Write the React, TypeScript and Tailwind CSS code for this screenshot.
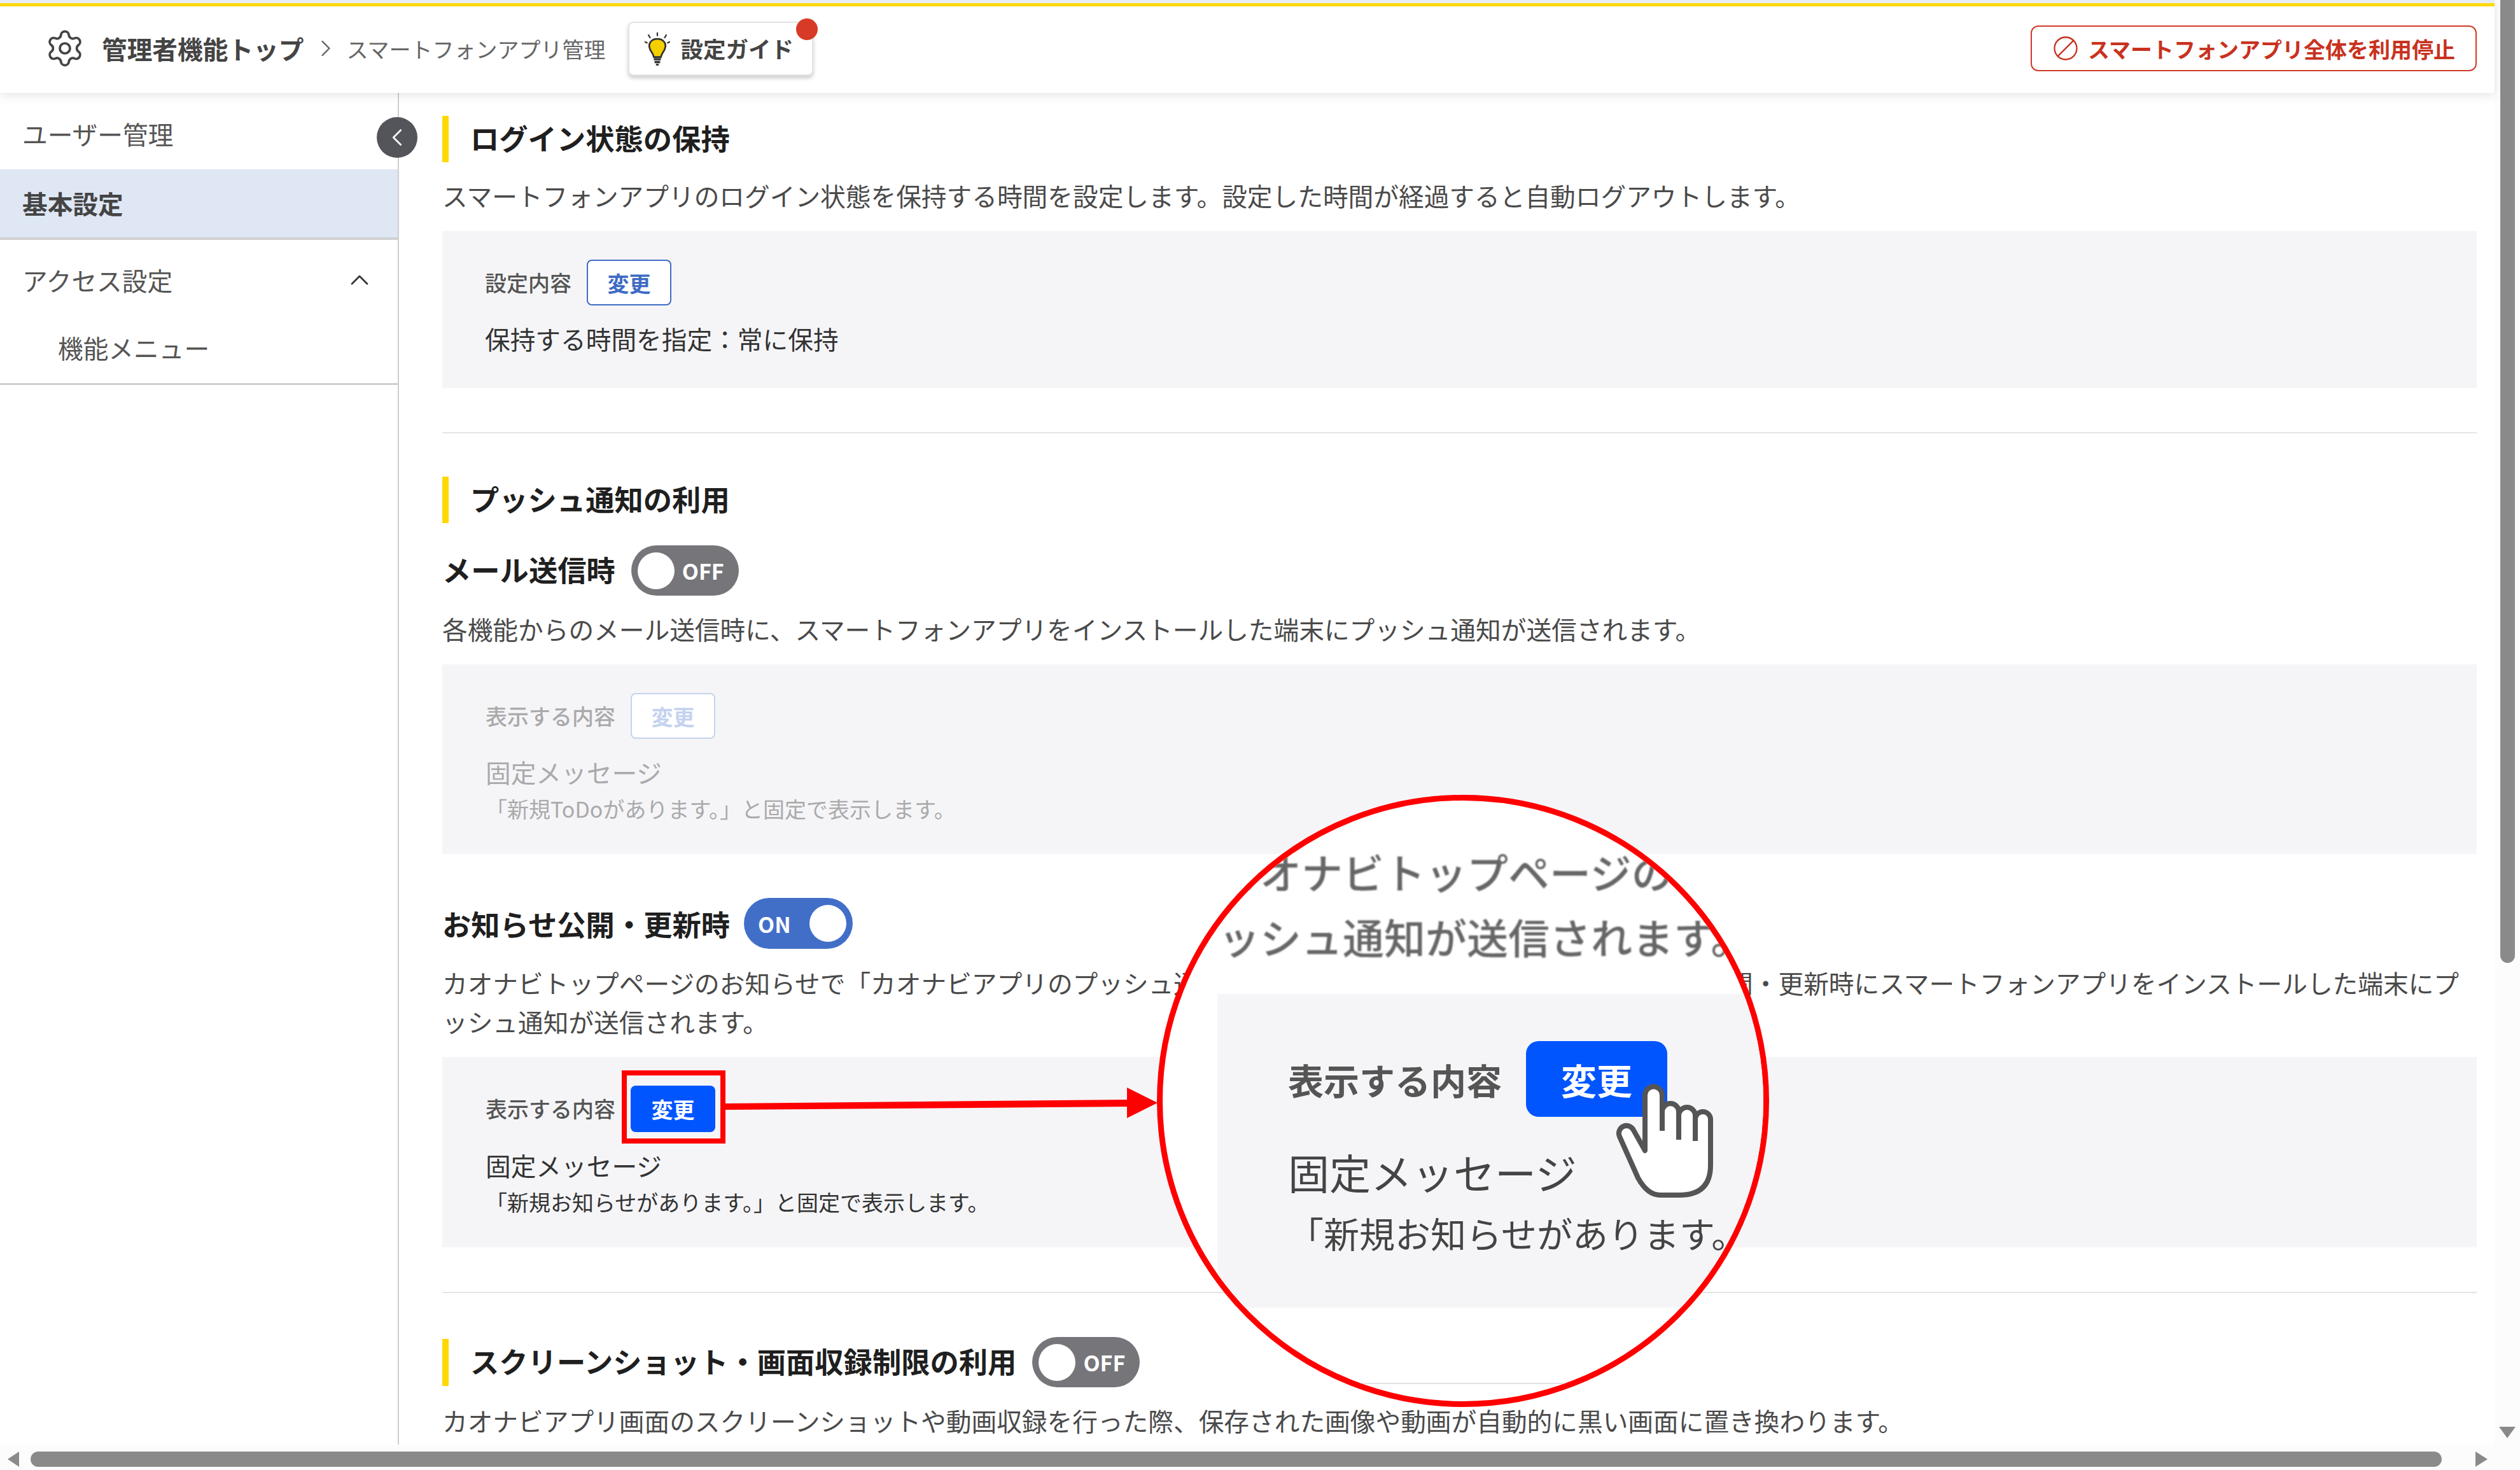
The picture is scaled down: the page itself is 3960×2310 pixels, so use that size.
import React from "react";
import { Ban, ChevronLeft, ChevronRight, ChevronUp, Settings } from "lucide-react";

function SectionTitle({ children }: { children: React.ReactNode }) {
  return (
    <div className="flex items-center">
      <div className="w-[10px] h-[73px] bg-[#ffd800]" />
      <h2 className="ml-[34px] pb-[4px] text-[45.3px] leading-[69px] font-bold text-[#1f1f1f]">{children}</h2>
    </div>
  );
}

function Toggle({ on }: { on: boolean }) {
  if (on) {
    return (
      <div className="w-[171px] h-[80px] rounded-full bg-[#416fc8] flex items-center justify-between pl-[22px] pr-[10px]">
        <span className="text-[34px] font-bold text-white">ON</span>
        <div className="w-[58px] h-[58px] rounded-full bg-white" />
      </div>
    );
  }
  return (
    <div className="w-[169px] h-[79px] rounded-full bg-[#75757a] flex items-center pl-[10px]">
      <div className="w-[58px] h-[58px] rounded-full bg-white" />
      <span className="ml-[12px] text-[34px] font-bold text-white">OFF</span>
    </div>
  );
}

function Desc({ children }: { children: React.ReactNode }) {
  return <p className="mt-[21px] mb-[2px] text-[39.7px] leading-[61px] text-[#4a4a4a] whitespace-nowrap">{children}</p>;
}

function Hand() {
  return (
    <svg viewBox="0 0 153 181" className="absolute left-[712px] top-[443px] w-[153px] h-[181px]">
      <path
        d="M46 107 V20 A13.5 13.5 0 0 1 73 20 V46 A13 13 0 0 1 99 46 V52 A13 13 0 0 1 125 52 V58 A12 12 0 0 1 149 58 V130 Q149 177 100 177 H70 Q50 177 35 150 L6 85 A12 12 0 0 1 28 75 Z"
        fill="#fff"
        stroke="#555"
        strokeWidth="8"
        strokeLinejoin="round"
      />
      <path d="M73 46 V76 M99 52 V90 M125 58 V92" fill="none" stroke="#555" strokeWidth="8" />
    </svg>
  );
}

function Magnifier() {
  return (
    <div className="absolute left-[1818px] top-[1249px] w-[962px] h-[962px] rounded-full border-[9px] border-[#f00] bg-white overflow-hidden pt-[60px]">
      <p className="ml-[88px] text-[65px] leading-[102px] font-medium text-[#666] whitespace-nowrap blur-[1px]">
        カオナビトップページの
        <br />
        ッシュ通知が送信されます。
      </p>
      <div className="ml-[86px] mt-[40px] w-[1000px] h-[493px] bg-[#f5f5f8] pt-[74px] pl-[111px] flex flex-col">
        <div className="flex items-center h-[119px]">
          <span className="text-[56px] font-bold text-[#555] w-[333px] whitespace-nowrap blur-[0.6px]">表示する内容</span>
          <div className="ml-[41px] w-[222px] h-[119px] rounded-[20px] bg-[#0055ff] flex items-center justify-center">
            <span className="text-[56px] font-bold text-white">変更</span>
          </div>
        </div>
        <p className="mt-[41px] mb-[2px] text-[65px] leading-[90px] text-[#444] whitespace-nowrap blur-[0.6px]">固定メッセージ</p>
        <p className="mt-[9px] text-[56px] leading-[80px] text-[#444] whitespace-nowrap blur-[0.6px]">
          「新規お知らせがあります。
        </p>
      </div>
      <div className="mt-[118px] h-[2px] bg-[#e3e3e6]" />
      <Hand />
    </div>
  );
}

function Sidebar() {
  return (
    <aside className="relative w-[627px] shrink-0 border-r-2 border-[#cfcfcf] text-[39.7px] text-[#555]">
      <div className="h-[120px] pt-[8px] pl-[35px] flex items-center">ユーザー管理</div>
      <div className="h-[111px] pb-[2px] pl-[35px] flex items-center bg-[#dfe7f5] border-b-4 border-[#d0d0d0] font-bold text-[#444]">基本設定</div>
      <div className="h-[128px] pb-[3px] pl-[35px] pr-[36px] flex items-center justify-between">
        アクセス設定
        <ChevronUp size={48} strokeWidth={1.4} className="text-[#333]" />
      </div>
      <div className="h-[100px] pb-[16px] pl-[91px] flex items-center border-b-[3px] border-[#cfcfcf]">機能メニュー</div>
      <button className="absolute left-[592px] top-[38px] w-[64px] h-[64px] rounded-full bg-[#54555a] flex items-center justify-center text-white">
        <ChevronLeft size={46} strokeWidth={1.4} />
      </button>
    </aside>
  );
}

function Header() {
  return (
    <header className="relative z-10 shrink-0 h-[146px] bg-white shadow-[0_4px_14px_rgba(0,0,0,0.1)]">
      <div className="h-[5px] bg-[#e9ecf4]" />
      <div className="h-[5px] bg-[#ffd800]" />
      <div className="h-[136px] pl-[70px] pr-[28px] pb-[4px] flex items-center">
        <Settings size={64} strokeWidth={1.4} className="text-[#444]" />
        <span className="ml-[26px] text-[39.7px] font-bold text-[#444]">管理者機能トップ</span>
        <ChevronRight size={44} strokeWidth={1.3} className="ml-[12px] text-[#666]" />
        <span className="ml-[11px] text-[34px] text-[#666]">スマートフォンアプリ管理</span>
        <div className="relative ml-[36px] w-[291px] h-[85px] rounded-[8px] border-2 border-[#e4e4e4] bg-white shadow-[0_4px_6px_rgba(0,0,0,0.2)] flex items-center pl-[23px]">
          <svg viewBox="0 0 38 48" className="w-[42px] h-[53px]">
            <path d="M19 10 C10 10 6 17 8 23 C9 28 13 30 14 36 H24 C25 30 29 28 30 23 C32 17 28 10 19 10 Z" fill="#f5d000" stroke="#333" strokeWidth="2.5" />
            <path d="M14 39 H24 M15 43 H23 M17 47 H21" stroke="#333" strokeWidth="3" />
            <path d="M19 1 V6 M6 4 L9 9 M32 4 L29 9 M1 14 L5 16 M37 14 L33 16" stroke="#333" strokeWidth="2" />
          </svg>
          <span className="ml-[15px] text-[35.5px] font-bold text-[#444]">設定ガイド</span>
          <div className="absolute -right-[9px] -top-[7px] w-[34px] h-[34px] rounded-full bg-[#d73a26]" />
        </div>
        <button className="ml-auto w-[701px] h-[72px] rounded-[12px] border-2 border-[#d03a2a] flex items-center pl-[32px] text-[#c8321e]">
          <Ban size={42} strokeWidth={1.3} className="-scale-x-100" />
          <span className="ml-[14px] text-[34px] font-bold whitespace-nowrap">スマートフォンアプリ全体を利用停止</span>
        </button>
      </div>
    </header>
  );
}

function Main() {
  return (
    <main className="flex-1 min-w-0 pl-[68px] pr-[28px] overflow-hidden flex flex-col">
      <div className="mt-[36px]">
        <SectionTitle>ログイン状態の保持</SectionTitle>
      </div>
      <Desc>スマートフォンアプリのログイン状態を保持する時間を設定します。設定した時間が経過すると自動ログアウトします。</Desc>
      <div className="mt-[24px] bg-[#f5f5f8] pl-[67px] pt-[45px] pb-[46px] flex flex-col">
        <div className="flex items-center h-[72px]">
          <span className="w-[160px] pb-[2px] text-[34px] font-medium text-[#555]">設定内容</span>
          <div className="w-[133px] h-[72px] rounded-[8px] border-2 border-[#3f6cc4] bg-white flex items-center justify-center text-[34px] font-bold text-[#3f6cc4]">変更</div>
        </div>
        <p className="mt-[21px] mb-[2px] text-[39.7px] leading-[61px] text-[#333]">保持する時間を指定：常に保持</p>
      </div>
      <div className="mt-[69px] h-[2px] shrink-0 bg-[#e5e5e5]" />

      <div className="mt-[68px]">
        <SectionTitle>プッシュ通知の利用</SectionTitle>
      </div>
      <div className="mt-[35px] h-[79px] flex items-center">
        <span className="pb-[4px] text-[45.3px] font-bold text-[#1f1f1f]">メール送信時</span>
        <div className="ml-[25px]"><Toggle on={false} /></div>
      </div>
      <Desc>各機能からのメール送信時に、スマートフォンアプリをインストールした端末にプッシュ通知が送信されます。</Desc>
      <div className="mt-[24px] bg-[#f5f5f8] pl-[68px] pt-[45px] pb-[44px] flex flex-col">
        <div className="flex items-center h-[72px]">
          <span className="w-[228px] pb-[2px] text-[34px] font-medium text-[#aaa]">表示する内容</span>
          <div className="w-[133px] h-[72px] rounded-[8px] border-2 border-[#c5d3ef] bg-white flex items-center justify-center text-[34px] font-bold text-[#c5d3ef]">変更</div>
        </div>
        <p className="mt-[21px] mb-[2px] text-[39.7px] leading-[61px] text-[#aaa]">固定メッセージ</p>
        <p className="mt-[1px] mb-[2px] text-[34px] leading-[50px] text-[#aaa]">「新規ToDoがあります。」と固定で表示します。</p>
      </div>

      <div className="mt-[69px] h-[80px] flex items-center">
        <span className="pt-[1px] text-[45.3px] font-bold text-[#1f1f1f]">お知らせ公開・更新時</span>
        <div className="ml-[22px]"><Toggle on /></div>
      </div>
      <p className="mt-[22px] mb-[2px] text-[39.7px] leading-[61px] text-[#4a4a4a] whitespace-nowrap">
        カオナビトップページのお知らせで「カオナビアプリのプッシュ通知を送信する」をチェックすると、お知らせ公開・更新時にスマートフォンアプリをインストールした端末にプ
        <br />
        ッシュ通知が送信されます。
      </p>
      <div className="mt-[24px] bg-[#f5f5f8] pl-[68px] pt-[45px] pb-[44px] flex flex-col">
        <div className="flex items-center h-[73px]">
          <span className="w-[228px] pb-[2px] text-[34px] font-medium text-[#555]">表示する内容</span>
          <div className="w-[133px] h-[73px] rounded-[8px] bg-[#0055ff] flex items-center justify-center text-[34px] font-bold text-white">変更</div>
        </div>
        <p className="mt-[21px] mb-[2px] text-[39.7px] leading-[61px] text-[#333]">固定メッセージ</p>
        <p className="mt-[1px] mb-[2px] text-[34px] leading-[50px] text-[#333]">「新規お知らせがあります。」と固定で表示します。</p>
      </div>
      <div className="mt-[70px] h-[2px] shrink-0 bg-[#e5e5e5]" />

      <div className="mt-[69px] h-[79px] shrink-0 flex items-center">
        <div className="w-[10px] h-[74px] bg-[#ffd800]" />
        <h2 className="ml-[34px] pb-[4px] text-[45.3px] font-bold text-[#1f1f1f]">スクリーンショット・画面収録制限の利用</h2>
        <div className="ml-[25px]"><Toggle on={false} /></div>
      </div>
      <Desc>カオナビアプリ画面のスクリーンショットや動画収録を行った際、保存された画像や動画が自動的に黒い画面に置き換わります。</Desc>
    </main>
  );
}

function HorizontalBar() {
  return (
    <div className="shrink-0 h-[40px] bg-[#fcfcfc] flex items-center pl-[12px] pt-[6px]">
      <svg viewBox="0 0 18 24" className="w-[18px] h-[24px]"><polygon points="18,0 18,24 0,12" fill="#8a8a8a" /></svg>
      <div className="ml-[18px] w-[3789px] h-[24px] rounded-full bg-[#8a8a8a]" />
      <svg viewBox="0 0 19 24" className="ml-[53px] w-[19px] h-[24px]"><polygon points="0,0 0,24 19,12" fill="#8a8a8a" /></svg>
    </div>
  );
}

function VerticalBar() {
  return (
    <div className="w-[40px] shrink-0 bg-[#fcfcfc] flex flex-col items-center pb-[50px] justify-between">
      <div className="w-[23px] h-[1513px] rounded-b-full bg-[#8a8a8a]" />
      <svg viewBox="0 0 26 18" className="w-[26px] h-[18px]"><polygon points="0,0 26,0 13,18" fill="#8a8a8a" /></svg>
    </div>
  );
}

export default function App() {
  return (
    <div className="relative w-[3960px] h-[2310px] overflow-hidden bg-white flex font-['Noto_Sans_CJK_JP','Noto_Sans',sans-serif]">
      <div className="w-[3920px] shrink-0 flex flex-col">
        <Header />
        <div className="flex-1 min-h-0 flex">
          <Sidebar />
          <Main />
        </div>
        <HorizontalBar />
      </div>
      <VerticalBar />

      {/* 注釈 */}
      <div className="absolute left-[977px] top-[1682px] w-[163px] h-[115px] border-[8px] border-[#f00]" />
      <svg viewBox="0 0 680 60" className="absolute left-[1140px] top-[1702px] w-[680px] h-[60px]">
        <polygon points="0,32 632,26 632,37 0,42" fill="#f00" />
        <polygon points="631,7 679,31 631,55" fill="#f00" />
      </svg>
      <Magnifier />
    </div>
  );
}
